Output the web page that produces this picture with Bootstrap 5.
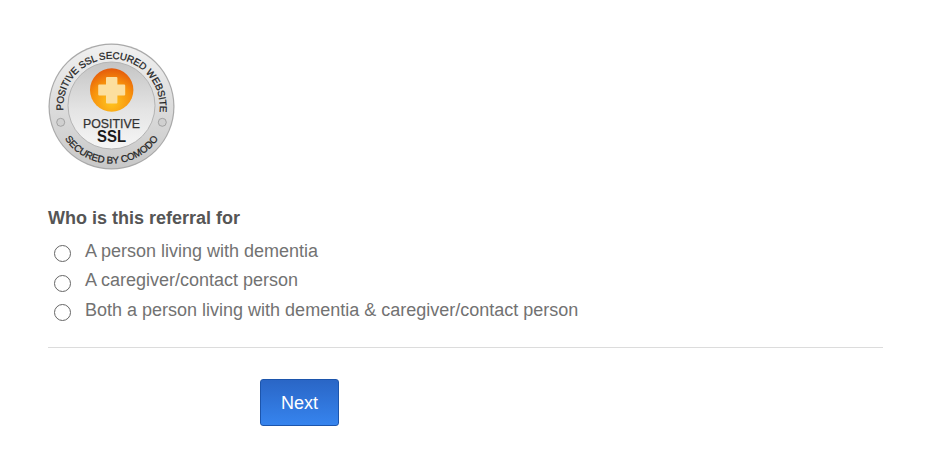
<!DOCTYPE html>
<html lang="en">
<head>
  <meta charset="UTF-8">
  <meta name="viewport" content="width=device-width, initial-scale=1.0">
  <title>Referral</title>
  <link href="https://cdn.jsdelivr.net/npm/bootstrap@5.3.0/dist/css/bootstrap.min.css" rel="stylesheet">
  <style>
    body { font-family: "Liberation Sans", Arial, sans-serif; background: #fff; }
    .page-wrap { padding: 43px 47px 0 48px; }
    .ssl-seal { display: block; width: 127px; height: 127px; margin-bottom: 38px; }
    .seal-ring { font-family: "Liberation Sans", Arial, sans-serif; font-size: 9.8px; font-weight: 400; fill: #222; stroke: #222; stroke-width: 0.25px; }
    .seal-word { font-family: "Liberation Sans", Arial, sans-serif; font-weight: 400; fill: #333; stroke: #333; stroke-width: 0.25px; text-anchor: middle; }
    .seal-ssl { font-family: "Liberation Sans", Arial, sans-serif; font-weight: 700; fill: #1a1a1a; text-anchor: middle; }
    .question { font-size: 18px; font-weight: 700; color: #555; line-height: 21px; margin-bottom: 9.8px; }
    .answer { display: flex; align-items: flex-start; height: 29.5px; margin: 0; }
    .answer input { appearance: none; width: 17px; height: 17px; margin: 6.6px 14px 0 6px; border: 1px solid #666; border-radius: 50%; background: #fff; flex: none; }
    .answer span { font-size: 18px; line-height: 24px; color: #727272; }
    .divider { border: 0; border-top: 1px solid #dcdcdc; opacity: 1; margin: 19.6px 0 31px; }
    .btn-next { display: block; width: 79px; height: 47px; margin-left: 212px; padding: 2px 0 0; font-size: 18px; color: #fff; border: 1px solid #1c55ac; border-radius: 3px; background: linear-gradient(#2a66c6, #3684ee); }
    .btn-next:hover { color: #fff; background: linear-gradient(#2a66c6, #3684ee); border-color: #1c55ac; }
  </style>
</head>
<body>

<div class="page-wrap">
  <!-- seal -->
  <svg class="ssl-seal" viewBox="0 0 127 127" role="img" aria-label="Positive SSL secured website">
    <defs>
      <linearGradient id="outerRing" x1="0" y1="0" x2="0" y2="1">
        <stop offset="0" stop-color="#f0f0f0"/>
        <stop offset="1" stop-color="#c8c8c8"/>
      </linearGradient>
      <linearGradient id="innerDisc" x1="0" y1="0" x2="0" y2="1">
        <stop offset="0" stop-color="#c4c4c4"/>
        <stop offset="0.55" stop-color="#e4e4e4"/>
        <stop offset="1" stop-color="#f6f6f6"/>
      </linearGradient>
      <radialGradient id="orangeBall" cx="0.5" cy="0.78" r="0.78">
        <stop offset="0" stop-color="#ffc61f"/>
        <stop offset="0.6" stop-color="#f7900c"/>
        <stop offset="1" stop-color="#e4590a"/>
      </radialGradient>
      <path id="topArc" d="M15.4 68.5 A48.3 48.3 0 1 1 111.6 68.5"/>
      <path id="bottomArc" d="M8.5 77 A56.5 56.5 0 0 0 118.5 77"/>
    </defs>
    <circle cx="63.5" cy="63.5" r="63" fill="#a9a9a9"/>
    <circle cx="63.5" cy="63.5" r="61.8" fill="url(#outerRing)"/>
    <circle cx="63.5" cy="62.5" r="43.5" fill="url(#innerDisc)" stroke="#b4b4b4"/>
    <circle cx="12.7" cy="79.3" r="4" fill="#d0d0d0" stroke="#969696" stroke-width="0.8"/>
    <circle cx="114.3" cy="79.3" r="4" fill="#d0d0d0" stroke="#969696" stroke-width="0.8"/>
    <text class="seal-ring"><textPath href="#topArc" textLength="160" startOffset="1">POSITIVE SSL SECURED WEBSITE</textPath></text>
    <text class="seal-ring"><textPath href="#bottomArc" startOffset="50%" text-anchor="middle" textLength="110">SECURED BY COMODO</textPath></text>
    <circle cx="63.7" cy="47" r="21.7" fill="url(#orangeBall)"/>
    <path d="M59 34h9.4a1 1 0 0 1 1 1v6.5h6.8a1 1 0 0 1 1 1v9a1 1 0 0 1-1 1h-6.8v7a1 1 0 0 1-1 1h-9.4a1 1 0 0 1-1-1v-7h-6.8a1 1 0 0 1-1-1v-9a1 1 0 0 1 1-1h6.8v-6.5a1 1 0 0 1 1-1z" fill="#fcdf9f"/>
    <text class="seal-word" x="63.5" y="85.3" font-size="13.5" textLength="57" lengthAdjust="spacingAndGlyphs">POSITIVE</text>
    <text class="seal-ssl" x="63.5" y="99.3" font-size="16.5" textLength="29" lengthAdjust="spacingAndGlyphs">SSL</text>
  </svg>

  <form>
    <div class="question">Who is this referral for</div>
    <label class="answer"><input type="radio" name="referral"><span>A person living with dementia</span></label>
    <label class="answer"><input type="radio" name="referral"><span>A caregiver/contact person</span></label>
    <label class="answer"><input type="radio" name="referral"><span>Both a person living with dementia &amp; caregiver/contact person</span></label>
    <hr class="divider">
    <button type="button" class="btn btn-next">Next</button>
  </form>
</div>

<script src="https://cdn.jsdelivr.net/npm/bootstrap@5.3.0/dist/js/bootstrap.bundle.min.js"></script>
</body>
</html>
